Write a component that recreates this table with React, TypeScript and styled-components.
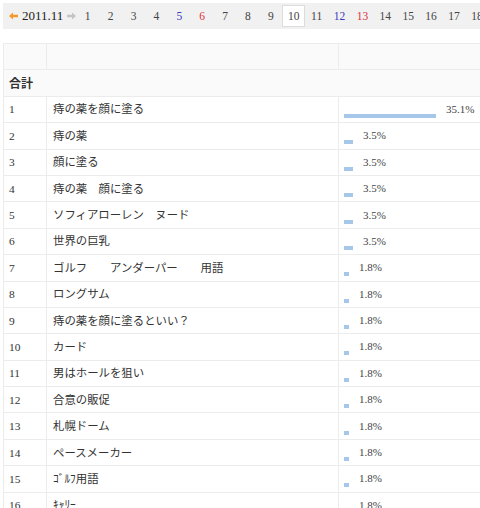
import React from "react";
import styled, { createGlobalStyle } from "styled-components";

const Global = createGlobalStyle`
  html, body { margin: 0; padding: 0; background: #fff; }
  body {
    padding: 3px;
    overflow: hidden;
    font-family: "Liberation Serif", "Noto Sans CJK JP", serif;
    color: #333;
  }
`;

const Page = styled.div`
  width: 700px;
`;

const DateBar = styled.div`
  display: flex;
  align-items: center;
  height: 26px;
  background: #f1f1f1;
  padding-left: 5px;
  white-space: nowrap;
`;

const Arrow = styled.span`
  display: inline-flex;
  align-items: center;
  justify-content: center;
  width: 10px;
  height: 10px;
`;

const Month = styled.span`
  font-size: 13px;
  color: #222;
  margin: 0 3px 0 4px;
`;

const Day = styled.span<{ $tone?: "sat" | "sun"; $active?: boolean }>`
  display: inline-flex;
  align-items: center;
  justify-content: center;
  width: 22.9px;
  height: 22px;
  box-sizing: border-box;
  font-size: 11.5px;
  color: ${(p) => (p.$tone === "sat" ? "#3a3ac0" : p.$tone === "sun" ? "#e0303a" : "#444")};
  background: ${(p) => (p.$active ? "#fff" : "transparent")};
  border: 1px solid ${(p) => (p.$active ? "#dcdcdc" : "transparent")};
`;

const Table = styled.table`
  margin-top: 14px;
  width: 700px;
  border-collapse: collapse;
  table-layout: fixed;
  font-size: 11.4px;
`;

const Row = styled.tr<{ $head?: boolean }>`
  height: 26.4px;
  background: ${(p) => (p.$head ? "#fafafa" : "#fff")};
`;

const Cell = styled.td<{ $pad?: number }>`
  border: 1px solid #ececec;
  padding: 0 0 0 ${(p) => p.$pad ?? 5}px;
  line-height: 16px;
  vertical-align: middle;
  white-space: nowrap;
  overflow: hidden;
`;

const TotalCell = styled.td`
  border: 1px solid #ececec;
  padding: 0 0 0 5px;
  font-weight: bold;
  font-size: 12px;
  color: #333;
  vertical-align: middle;
`;

const Bar = styled.span`
  display: inline-block;
  height: 4px;
  background: #a7c7ea;
  vertical-align: -5px;
  margin-right: 10px;
`;

const Pct = styled.span`
  font-size: 11px;
  color: #444;
`;

const LeftArrow = () => (
  <svg width="9" height="8" viewBox="0 0 9 8">
    <path d="M0 4 L4 0.5 L4 2.8 L9 2.8 L9 5.2 L4 5.2 L4 7.5 Z" fill="#f39a2c" />
  </svg>
);

const RightArrow = () => (
  <svg width="9" height="8" viewBox="0 0 9 8">
    <path d="M9 4 L5 0.5 L5 2.8 L0 2.8 L0 5.2 L5 5.2 L5 7.5 Z" fill="#c4c4c4" />
  </svg>
);

const rows: [string, number][] = [
  ["痔の薬を顔に塗る", 35.1],
  ["痔の薬", 3.5],
  ["顔に塗る", 3.5],
  ["痔の薬　顔に塗る", 3.5],
  ["ソフィアローレン　ヌード", 3.5],
  ["世界の巨乳", 3.5],
  ["ゴルフ　　アンダーパー　　用語", 1.8],
  ["ロングサム", 1.8],
  ["痔の薬を顔に塗るといい？", 1.8],
  ["カード", 1.8],
  ["男はホールを狙い", 1.8],
  ["合意の販促", 1.8],
  ["札幌ドーム", 1.8],
  ["ペースメーカー", 1.8],
  ["ｺﾞﾙﾌ用語", 1.8],
  ["ｷｬﾘｰ", 1.8],
];

const days = Array.from({ length: 18 }, (_, i) => i + 1);
const tone = (d: number): "sat" | "sun" | undefined =>
  d % 7 === 5 ? "sat" : d % 7 === 6 ? "sun" : undefined;

export default function App() {
  return (
    <Page>
      <Global />
      <DateBar>
        <Arrow><LeftArrow /></Arrow>
        <Month>2011.11</Month>
        <Arrow><RightArrow /></Arrow>
        {days.map((d) => (
          <Day key={d} $tone={tone(d)} $active={d === 10}>
            {d}
          </Day>
        ))}
      </DateBar>
      <Table>
        <colgroup>
          <col style={{ width: 43 }} />
          <col style={{ width: 292 }} />
          <col />
        </colgroup>
        <tbody>
          <Row $head>
            <Cell />
            <Cell />
            <Cell />
          </Row>
          <Row $head>
            <TotalCell colSpan={3}>合計</TotalCell>
          </Row>
          {rows.map(([kw, pct], i) => (
            <Row key={i}>
              <Cell>{i + 1}</Cell>
              <Cell $pad={6}>{kw}</Cell>
              <Cell>
                <Bar style={{ width: Math.round((pct / 35.1) * 92) }} />
                <Pct>{pct.toFixed(1)}%</Pct>
              </Cell>
            </Row>
          ))}
        </tbody>
      </Table>
    </Page>
  );
}
